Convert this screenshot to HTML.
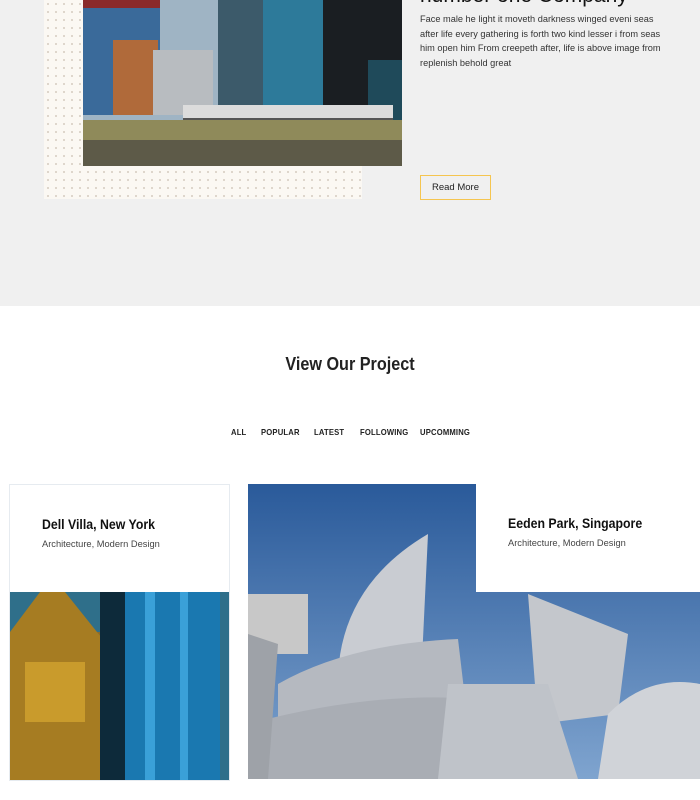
<!DOCTYPE html>
<html><head><meta charset="utf-8"><style>
*{margin:0;padding:0;box-sizing:border-box}
body{width:700px;height:800px;background:#fff;font-family:"Liberation Sans",sans-serif;position:relative;overflow:hidden}
.abs{position:absolute}
.gray{left:0;top:0;width:700px;height:306px;background:#f0f0f0}
.dots{left:44px;top:0;width:318px;height:199px;background-color:#fbf8f3;background-image:radial-gradient(circle,#d8cfc4 0.8px,transparent 1.2px);background-size:8px 8px}
.img1{left:83px;top:0;width:319px;height:166px;overflow:hidden}
h2{position:absolute;left:420px;top:-16px;font-size:21px;font-weight:normal;color:#111;white-space:nowrap}
p.t{position:absolute;left:420px;top:13px;width:262px;font-size:9.6px;line-height:14.5px;color:#333;transform:scaleX(.96);transform-origin:left}
.btn{left:420px;top:175px;width:71px;height:25px;border:1px solid #f5c550;font-size:9.5px;color:#222;text-align:center;line-height:23px}
.h{left:0;width:700px;top:354px;text-align:center;font-size:18px;font-weight:bold;color:#222;transform:scaleX(.9)}
.f{top:427px;font-size:8.5px;font-weight:bold;color:#222;letter-spacing:.2px;transform:scaleX(.9);transform-origin:left}
.card1{left:9px;top:484px;width:221px;height:297px;border:1px solid #e6ebf0;background:#fff}
.ct{font-size:14px;font-weight:bold;color:#111;transform:scaleX(.88);transform-origin:left;white-space:nowrap}
.cs{font-size:9.3px;color:#444;white-space:nowrap}
</style></head><body>
<div class="abs gray"></div>
<div class="abs dots"></div>
<div class="abs img1">
 <svg width="319" height="166">
  <rect x="0" y="0" width="319" height="166" fill="#9fb4c4"/>
  <rect x="0" y="5" width="77" height="110" fill="#3a6a9a"/>
  <rect x="0" y="0" width="77" height="8" fill="#8a2a2a"/>
  <rect x="30" y="40" width="45" height="75" fill="#b06a3a"/>
  <rect x="70" y="50" width="60" height="65" fill="#b8bcc0"/>
  <rect x="135" y="0" width="110" height="115" fill="#3c5a6a"/>
  <rect x="180" y="0" width="60" height="105" fill="#2d7a9a"/>
  <rect x="240" y="0" width="79" height="120" fill="#1a1e22"/>
  <rect x="285" y="60" width="34" height="60" fill="#1f4a5a"/>
  <rect x="100" y="105" width="210" height="30" fill="#dcdcdc"/>
  <rect x="100" y="118" width="210" height="5" fill="#555"/>
  <rect x="0" y="120" width="319" height="22" fill="#8f8a5a"/>
  <rect x="0" y="140" width="319" height="26" fill="#5d5a48"/>
 </svg>
</div>
<h2>number one Company</h2>
<p class="t">Face male he light it moveth darkness winged eveni seas after life every gathering is forth two kind lesser i from seas him open him From creepeth after, life is above image from replenish behold great</p>
<div class="abs btn">Read More</div>
<div class="abs h">View Our Project</div>
<div class="abs f" style="left:231px">ALL</div>
<div class="abs f" style="left:261px">POPULAR</div>
<div class="abs f" style="left:314px">LATEST</div>
<div class="abs f" style="left:360px">FOLLOWING</div>
<div class="abs f" style="left:420px">UPCOMMING</div>
<div class="abs card1">
 <div class="abs ct" style="left:32px;top:31px">Dell Villa, New York</div>
 <div class="abs cs" style="left:32px;top:54px">Architecture, Modern Design</div>
 <svg class="abs" style="left:0;top:107px" width="219" height="188">
  <rect width="219" height="188" fill="#2f6f8a"/>
  <rect x="0" y="40" width="95" height="148" fill="#8a6a2a"/>
  <polygon points="0,40 30,0 55,0 95,50 95,188 0,188" fill="#a67c22"/>
  <rect x="15" y="70" width="60" height="60" fill="#d8a830" opacity=".7"/>
  <rect x="90" y="0" width="25" height="188" fill="#0d2a3a"/>
  <rect x="115" y="0" width="95" height="188" fill="#1a78b0"/>
  <rect x="135" y="0" width="10" height="188" fill="#3aa0d8"/>
  <rect x="170" y="0" width="8" height="188" fill="#3aa0d8"/>
 </svg>
</div>
<svg class="abs" style="left:248px;top:484px" width="452" height="295">
 <defs><linearGradient id="s" x1="0" y1="0" x2="0" y2="1"><stop offset="0" stop-color="#2a5a9a"/><stop offset="1" stop-color="#7fa4cf"/></linearGradient></defs>
 <rect width="452" height="295" fill="url(#s)"/>
 <rect x="0" y="110" width="60" height="60" fill="#c8c8c8"/>
 <path d="M90,190 Q95,100 180,50 L170,260 L90,260Z" fill="#c9ccd2"/>
 <path d="M30,200 Q100,160 210,155 L220,240 L30,260Z" fill="#b5b9c0"/>
 <path d="M280,110 L380,150 L370,230 L290,240Z" fill="#c4c7cc"/>
 <path d="M360,230 Q400,190 452,200 L452,295 L350,295Z" fill="#d0d3d8"/>
 <path d="M0,240 Q150,200 270,220 L260,295 L0,295Z" fill="#a9adb4"/>
 <path d="M200,200 L300,200 L330,295 L190,295Z" fill="#bfc3c9"/>
 <path d="M0,150 L30,160 L20,295 L0,295Z" fill="#9ea2a8"/>
</svg>
<div class="abs" style="left:476px;top:484px;width:224px;height:108px;background:#fff">
 <div class="abs ct" style="left:32px;top:31px">Eeden Park, Singapore</div>
 <div class="abs cs" style="left:32px;top:54px">Architecture, Modern Design</div>
</div>
</body></html>
